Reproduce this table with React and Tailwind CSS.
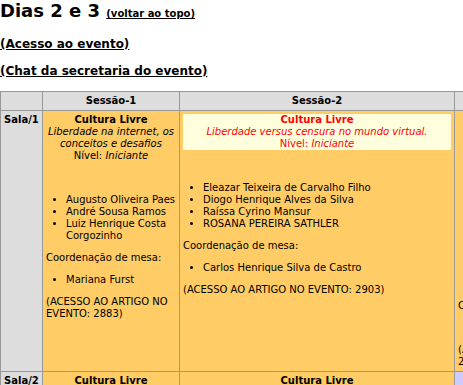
import React from "react";

const cell = "bg-[#ffcc66] px-[3px] pt-[3px] text-[10px] leading-[12px] text-black";

function Header({ title, sub }) {
  return (
    <div className="text-center">
      <b>Cultura Livre</b>
      <br />
      <i>{sub}</i>
      <br />
      Nível: <i>Iniciante</i>
    </div>
  );
}

function People({ names, mesa, code, mt = "mt-[32px]" }) {
  return (
    <>
      <ul className={`list-disc pl-[20px] ${mt} mb-[10px]`}>
        {names.map((n, i) => (
          <li key={i}>{n}</li>
        ))}
      </ul>
      <div>Coordenação de mesa:</div>
      <ul className="list-disc pl-[20px] my-[10px]">
        {mesa.map((n, i) => (
          <li key={i} className="whitespace-nowrap">{n}</li>
        ))}
      </ul>
      <div>{code}</div>
    </>
  );
}

export default function App() {
  return (
    <div
      className="w-[463px] h-[385px] overflow-hidden bg-white text-black"
      style={{ fontFamily: '"DejaVu Sans", Verdana, sans-serif' }}
    >
      <div className="h-[21px] leading-[21px] whitespace-nowrap">
        <span className="text-[18px] font-bold">Dias 2 e 3 </span>
        <a href="#" className="text-[10px] font-bold underline text-black">
          (voltar ao topo)
        </a>
      </div>
      <div className="mt-[16px] text-[12px] leading-[14px] font-bold">
        <a href="#" className="underline text-black">(Acesso ao evento)</a>
      </div>
      <div className="mt-[13px] text-[12px] leading-[14px] font-bold">
        <a href="#" className="underline text-black">(Chat da secretaria do evento)</a>
      </div>

      <div className="mt-[13px] grid w-max grid-cols-[41px_136px_274px_180px] grid-rows-[18px_260px_60px] gap-px bg-[#999999] p-px text-[10px] leading-[12px]">
        {/* header row */}
        <div className="bg-[#dddddd]" />
        <div className="bg-[#dddddd] flex items-center justify-center font-bold">Sessão-1</div>
        <div className="bg-[#dddddd] flex items-center justify-center font-bold">Sessão-2</div>
        <div className="bg-[#dddddd] flex items-center justify-center font-bold">Sessão-3</div>

        {/* row 1 */}
        <div className="bg-[#dddddd] px-[3px] pt-[3px] font-bold">Sala/1</div>
        <div className={cell}>
          <Header sub={<>Liberdade na internet, os<br />conceitos e desafios</>} />
          <People
            names={[
              <span className="whitespace-nowrap">Augusto Oliveira Paes</span>,
              "André Sousa Ramos",
              <>Luiz Henrique Costa<br />Corgozinho</>,
            ]}
            mesa={["Mariana Furst"]}
            code={<>(ACESSO AO ARTIGO NO<br />EVENTO: 2883)</>}
          />
        </div>
        <div className={cell}>
          <div className="bg-[#ffffdd] text-[#ff0000] text-center">
            <b>Cultura Livre</b>
            <br />
            <i>Liberdade versus censura no mundo virtual.</i>
            <br />
            Nível: <i>Iniciante</i>
          </div>
          <People
            names={[
              "Eleazar Teixeira de Carvalho Filho",
              "Diogo Henrique Alves da Silva",
              "Raíssa Cyrino Mansur",
              "ROSANA PEREIRA SATHLER",
            ]}
            mesa={["Carlos Henrique Silva de Castro"]}
            code="(ACESSO AO ARTIGO NO EVENTO: 2903)"
          />
        </div>
        <div className={`${cell} overflow-hidden`}>
          <Header sub={<>Direitos autorais e<br />compartilhamento de cultura</>} />
          <People
            names={[
              "Ana Paula Ribeiro",
              "Bruno Almeida",
              "Camila Ferreira",
              "Daniel Moreira",
              "Eduardo Lima Santos",
              "Fernanda Costa",
              "Gabriel Souza",
              "Helena Martins",
            ]}
            mesa={["Igor Pereira"]}
            code={<>(ACESSO AO ARTIGO NO EVENTO:<br />2911)</>}
          />
        </div>

        {/* row 2 */}
        <div className="bg-[#dddddd] px-[3px] pt-[3px] font-bold">Sala/2</div>
        <div className={`${cell} text-center font-bold`}>Cultura Livre</div>
        <div className={`${cell} text-center font-bold`}>Cultura Livre</div>
        <div className="bg-[#ccccff] px-[3px] pt-[3px] text-center font-bold">Cultura Livre</div>
      </div>
    </div>
  );
}
